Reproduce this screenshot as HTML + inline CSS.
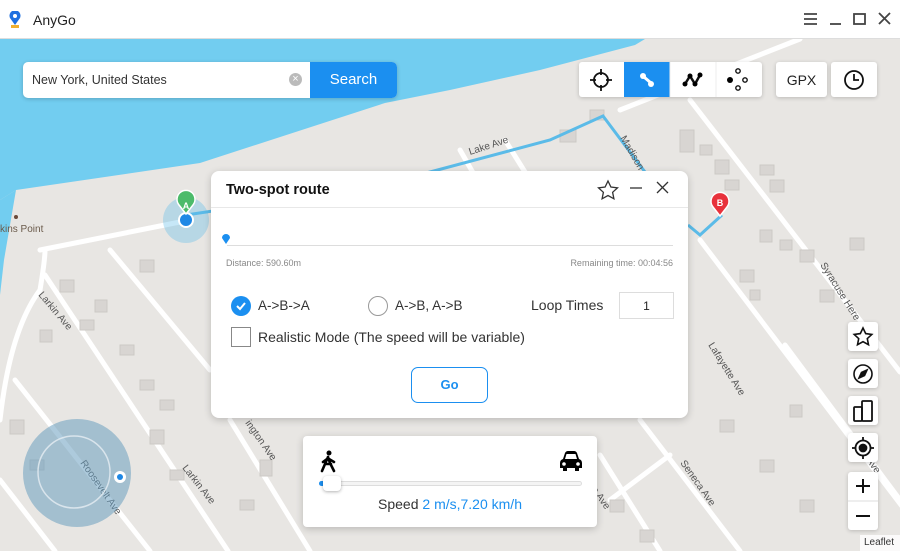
<!DOCTYPE html>
<html><head><meta charset="utf-8">
<style>
*{box-sizing:border-box;margin:0;padding:0}
body{width:900px;height:551px;overflow:hidden;font-family:"Liberation Sans",sans-serif;background:#e8e6e3;position:relative}
.abs{position:absolute}
.btn{position:absolute;background:#fff;border-radius:3px;box-shadow:0 1px 4px rgba(0,0,0,.2);display:flex;align-items:center;justify-content:center}
.card{position:absolute;background:#fff;border-radius:8px;box-shadow:0 2px 8px rgba(0,0,0,.2)}
</style></head><body>
<!-- map -->
<svg class="abs" style="left:0;top:0" width="900" height="551">
<rect width="900" height="551" fill="#e8e6e3"/>
<polygon points="0,39 645,39 635,45 540,70 450,90 385,103 200,163 16,190 0,200" fill="#72cdf0"/>
<polygon points="0,200 16,190 4,260 0,295" fill="#72cdf0"/>
<g stroke="#fff" stroke-width="5" fill="none" stroke-linecap="round">
<path d="M0,420 Q10,330 40,290 Q45,260 45,250"/>
<path d="M40,250 L190,220"/>
<path d="M15,380 L150,551"/>
<path d="M0,480 L55,551"/>
<path d="M45,275 L228,551"/>
<path d="M110,250 L210,370"/>
<path d="M230,420 L310,551"/>
<path d="M690,100 L900,372"/>
<path d="M700,240 L920,530"/>
<path d="M620,110 L800,39"/>
<path d="M785,345 L900,500"/>
<path d="M640,420 L740,551"/>
<path d="M670,455 L610,500"/>
<path d="M600,455 L660,551"/>
<path d="M505,140 L530,180"/>
<path d="M460,150 L480,185"/>
</g>
<g fill="#d8d5d2" stroke="#ccc9c5" stroke-width="1">
<rect x="560" y="130" width="16" height="12"/><rect x="590" y="110" width="14" height="10"/><rect x="680" y="130" width="14" height="22"/><rect x="700" y="145" width="12" height="10"/>
<rect x="715" y="160" width="14" height="14"/><rect x="725" y="180" width="14" height="10"/><rect x="760" y="165" width="14" height="10"/><rect x="770" y="180" width="14" height="12"/>
<rect x="800" y="250" width="14" height="12"/><rect x="780" y="240" width="12" height="10"/><rect x="820" y="290" width="14" height="12"/><rect x="850" y="238" width="14" height="12"/>
<rect x="760" y="230" width="12" height="12"/><rect x="740" y="270" width="14" height="12"/><rect x="750" y="290" width="10" height="10"/>
<rect x="60" y="280" width="14" height="12"/><rect x="80" y="320" width="14" height="10"/><rect x="40" y="330" width="12" height="12"/><rect x="120" y="345" width="14" height="10"/>
<rect x="140" y="380" width="14" height="10"/><rect x="160" y="400" width="14" height="10"/><rect x="150" y="430" width="14" height="14"/><rect x="170" y="470" width="14" height="10"/>
<rect x="10" y="420" width="14" height="14"/><rect x="30" y="460" width="14" height="10"/><rect x="95" y="300" width="12" height="12"/><rect x="140" y="260" width="14" height="12"/>
<rect x="260" y="460" width="12" height="16"/><rect x="240" y="500" width="14" height="10"/><rect x="610" y="500" width="14" height="12"/><rect x="640" y="530" width="14" height="12"/>
<rect x="720" y="420" width="14" height="12"/><rect x="760" y="460" width="14" height="12"/><rect x="800" y="500" width="14" height="12"/><rect x="790" y="405" width="12" height="12"/>
</g>
<!-- blue route -->
<g stroke="#5bbbe8" stroke-width="3" fill="none">
<path d="M186,215 L300,198 L400,180 L550,140 L603,116 L645,172"/>
<path d="M688,225 L700,235 L722,215"/>
</g>
<g font-size="10" fill="#555" font-family="Liberation Sans,sans-serif">
<text x="470" y="155" transform="rotate(-18 470 155)">Lake Ave</text>
<text x="620" y="138" transform="rotate(60 620 138)">Madison</text>
<text x="0" y="232" fill="#6a5a4a">kins Point</text>
<text x="38" y="295" transform="rotate(50 38 295)">Larkin Ave</text>
<text x="182" y="468" transform="rotate(52 182 468)">Larkin Ave</text>
<text x="80" y="463" transform="rotate(55 80 463)">Roosevelt Ave</text>
<text x="245" y="423" transform="rotate(55 245 423)">ington Ave</text>
<text x="588" y="485" transform="rotate(55 588 485)">go Ave</text>
<text x="680" y="463" transform="rotate(55 680 463)">Seneca Ave</text>
<text x="708" y="345" transform="rotate(58 708 345)">Lafayette Ave</text>
<text x="820" y="265" transform="rotate(58 820 265)">Syracuse Here</text>
<text x="866" y="460" transform="rotate(55 866 460)">Ave</text>
</g>
<circle cx="16" cy="217" r="2" fill="#6a4a3a"/>
<!-- A marker -->
<circle cx="186" cy="220" r="23" fill="#5bbbe8" opacity=".35"/>
<circle cx="186" cy="220" r="7" fill="#1e88e5" stroke="#fff" stroke-width="2"/>
<path d="M186,214 l-7,-9 a9,9 0 1 1 14,0 z" fill="#4cbb6a" stroke="#fff" stroke-width="1.5"/>
<text x="186" y="209" font-size="9" fill="#fff" text-anchor="middle" font-weight="bold">A</text>
<!-- B marker -->
<path d="M720,216 l-7,-9 a9,9 0 1 1 14,0 z" fill="#e8323c" stroke="#fff" stroke-width="1.5"/>
<text x="720" y="206" font-size="9" fill="#fff" text-anchor="middle" font-weight="bold">B</text>
<!-- joystick -->
<circle cx="77" cy="473" r="54" fill="#6a9fc0" opacity=".55"/>
<circle cx="74" cy="472" r="36" fill="none" stroke="#e6eef2" stroke-width="1.5" opacity=".8"/>
<circle cx="120" cy="477" r="6" fill="#fff"/><circle cx="120" cy="477" r="3" fill="#1e88e5"/>
</svg>

<!-- title bar -->
<div class="abs" style="left:0;top:0;width:900px;height:39px;background:#fff;border-bottom:1px solid #ddd">
<svg class="abs" style="left:8px;top:11px" width="14" height="18"><path d="M7,14 L2,7 a5.5,5.5 0 1 1 10,0z" fill="#1e6fe0"/><circle cx="7" cy="5" r="2" fill="#fff"/><rect x="3" y="14" width="8" height="3" fill="#f0b030"/></svg>
<div class="abs" style="left:33px;top:12px;font-size:14px;color:#222">AnyGo</div>
<svg class="abs" style="left:800px;top:10px" width="95" height="20" stroke="#444" stroke-width="1.8" fill="none">
<path d="M4,4h13M4,9h13M4,14h13"/><path d="M30,14h11"/><rect x="54" y="4" width="11" height="10"/><path d="M79,3l11,11M90,3l-11,11"/></svg>
</div>

<!-- search -->
<div class="abs" style="left:23px;top:62px;width:374px;height:36px;background:#fff;border-radius:5px;box-shadow:0 1px 4px rgba(0,0,0,.2);overflow:hidden">
<div class="abs" style="left:9px;top:11px;font-size:12.5px;color:#333">New York, United States</div>
<div class="abs" style="left:266px;top:11px;width:13px;height:13px;border-radius:50%;background:#bbb;color:#fff;font-size:11px;line-height:13px;text-align:center">×</div>
<div class="abs" style="left:287px;top:0;width:87px;height:36px;background:#1b8ff0;color:#fff;font-size:15px;line-height:36px;text-align:center">Search</div>
</div>

<!-- toolbar -->
<div class="abs" style="left:579px;top:62px;width:183px;height:35px;background:#fff;border-radius:3px;box-shadow:0 1px 4px rgba(0,0,0,.2)"></div>
<svg class="abs" style="left:579px;top:62px" width="183" height="35">
<rect x="45" y="0" width="46" height="35" fill="#1b8ff0"/>
<line x1="91" y1="0" x2="91" y2="35" stroke="#eee"/><line x1="137" y1="0" x2="137" y2="35" stroke="#eee"/>
<g stroke="#111" stroke-width="1.8" fill="none"><circle cx="22" cy="18" r="7"/><path d="M22,7v6M22,23v6M11,18h6M27,18h6"/></g>
<g stroke="#fff" stroke-width="3"><line x1="65" y1="15" x2="72" y2="21"/></g><circle cx="64" cy="14" r="3" fill="#fff"/><circle cx="72" cy="22" r="3" fill="#fff"/>
<path d="M106,22 L111,14 L116,22 L121,13" stroke="#111" stroke-width="2.5" fill="none"/><circle cx="106" cy="22" r="2.5"/><circle cx="111" cy="14" r="2.5"/><circle cx="116" cy="22" r="2.5"/><circle cx="121" cy="13" r="2.5"/>
<g fill="none" stroke="#111" stroke-width="1.4"><circle cx="159" cy="9" r="2.2"/><circle cx="166" cy="18" r="2.2"/><circle cx="159" cy="26" r="2.2"/></g><circle cx="151" cy="18" r="3"/>
</svg>
<div class="btn" style="left:776px;top:62px;width:51px;height:35px;font-size:14px;color:#222">GPX</div>
<div class="btn" style="left:831px;top:62px;width:46px;height:35px"><svg width="22" height="22" fill="none" stroke="#111" stroke-width="1.8"><circle cx="11" cy="11" r="9"/><path d="M11,5v6h5"/></svg></div>

<!-- dialog -->
<div class="card" style="left:211px;top:171px;width:477px;height:247px">
<div class="abs" style="left:15px;top:11px;font-size:14.5px;font-weight:bold;color:#111">Two-spot route</div>
<svg class="abs" style="left:385px;top:8px" width="80" height="22" fill="none" stroke="#333" stroke-width="1.3">
<path d="M12,2 l2.9,6 6.6,.8 -4.9,4.5 1.3,6.5 -5.9,-3.3 -5.9,3.3 1.3,-6.5 -4.9,-4.5 6.6,-.8z"/>
<path d="M34,9h12"/><path d="M61,3l11,11M72,3l-11,11"/></svg>
<div class="abs" style="left:0;top:36px;width:477px;height:1px;background:#e8e8e8"></div>
<svg class="abs" style="left:10px;top:62px" width="10" height="12"><path d="M5,11 L1,5 a4,4 0 1 1 8,0z" fill="#1b8ff0"/></svg>
<div class="abs" style="left:16px;top:74px;width:446px;height:1px;background:#ddd"></div>
<div class="abs" style="left:15px;top:87px;font-size:9px;color:#888">Distance: 590.60m</div>
<div class="abs" style="right:15px;top:87px;font-size:9px;color:#888">Remaining time: 00:04:56</div>
<div class="abs" style="left:20px;top:125px;width:20px;height:20px;border-radius:50%;background:#1b8ff0"><svg width="20" height="20"><path d="M6,10l3,3 5,-6" stroke="#fff" stroke-width="2" fill="none"/></svg></div>
<div class="abs" style="left:47px;top:127px;font-size:13.5px;color:#333">A-&gt;B-&gt;A</div>
<div class="abs" style="left:157px;top:125px;width:20px;height:20px;border-radius:50%;border:1px solid #999"></div>
<div class="abs" style="left:184px;top:127px;font-size:13.5px;color:#333">A-&gt;B, A-&gt;B</div>
<div class="abs" style="left:320px;top:126px;font-size:14px;color:#333">Loop Times</div>
<div class="abs" style="left:408px;top:121px;width:55px;height:27px;border:1px solid #ddd;font-size:12px;text-align:center;line-height:26px;color:#222">1</div>
<div class="abs" style="left:20px;top:156px;width:20px;height:20px;border:1px solid #888"></div>
<div class="abs" style="left:47px;top:158px;font-size:14px;color:#333">Realistic Mode (The speed will be variable)</div>
<div class="abs" style="left:200px;top:196px;width:77px;height:36px;border:1.5px solid #1b8ff0;border-radius:7px;color:#1b8ff0;font-weight:bold;font-size:13px;text-align:center;line-height:33px">Go</div>
</div>

<!-- speed panel -->
<div class="card" style="left:303px;top:436px;width:294px;height:91px;border-radius:4px">
<svg class="abs" style="left:16px;top:14px" width="20" height="24"><circle cx="10" cy="3" r="2.5"/><path d="M9,7 L6,14 L3,21 M9,7 L11,13 L15,21 M8,9 L4,12 M10,9 L15,12 M7,14 L12,14" stroke="#000" stroke-width="2.6" fill="none" stroke-linecap="round"/></svg>
<svg class="abs" style="left:256px;top:14px" width="24" height="22"><path d="M4,9 L6,3 Q7,1 9,1 H15 Q17,1 18,3 L20,9 Q23,10 23,13 V18 H20 V21 H16 V18 H8 V21 H4 V18 H1 V13 Q1,10 4,9z M6,9 H18 L16.5,4 H7.5z" fill="#000" fill-rule="evenodd"/><circle cx="5" cy="14" r="1.8" fill="#fff"/><circle cx="19" cy="14" r="1.8" fill="#fff"/></svg>
<div class="abs" style="left:16px;top:45px;width:263px;height:5px;border:1px solid #ddd;border-radius:3px;background:#f4f4f4"></div>
<div class="abs" style="left:16px;top:45px;width:12px;height:5px;background:#1b8ff0;border-radius:3px"></div>
<div class="abs" style="left:20px;top:40px;width:18px;height:15px;border-radius:4px;background:#fff;box-shadow:0 1px 3px rgba(0,0,0,.3)"></div>
<div class="abs" style="left:0;top:60px;width:294px;text-align:center;font-size:14px;color:#333">Speed <span style="color:#1b8ff0">2 m/s,7.20 km/h</span></div>
</div>

<!-- right buttons -->
<div class="btn" style="left:848px;top:322px;width:30px;height:29px"><svg width="22" height="22" fill="none" stroke="#111" stroke-width="1.6"><path d="M11,2 l2.7,5.6 6.1,.8 -4.5,4.2 1.2,6.1 -5.5,-3 -5.5,3 1.2,-6.1 -4.5,-4.2 6.1,-.8z"/></svg></div>
<div class="btn" style="left:848px;top:359px;width:30px;height:29px"><svg width="22" height="22" fill="none" stroke="#111" stroke-width="1.6"><circle cx="11" cy="11" r="9"/><path d="M15,7 L12.5,12.5 L7,15 L9.5,9.5z" fill="#111"/></svg></div>
<div class="btn" style="left:848px;top:396px;width:30px;height:29px"><svg width="22" height="24" fill="none" stroke="#111" stroke-width="1.8"><rect x="2" y="8" width="8" height="14" rx="1"/><rect x="10" y="2" width="10" height="20" rx="1"/></svg></div>
<div class="btn" style="left:848px;top:433px;width:30px;height:29px"><svg width="24" height="24" fill="none" stroke="#111" stroke-width="1.8"><circle cx="12" cy="12" r="7.5"/><circle cx="12" cy="12" r="3.5" fill="#111"/><path d="M12,1v4M12,19v4M1,12h4M19,12h4"/></svg></div>
<div class="btn" style="left:848px;top:472px;width:30px;height:58px;flex-direction:column">
<svg width="30" height="58" stroke="#111" stroke-width="2"><path d="M15,7v14M8,14h14"/><line x1="0" y1="29" x2="30" y2="29" stroke="#ddd" stroke-width="1"/><path d="M8,44h14"/></svg></div>
<div class="abs" style="left:860px;top:535px;width:40px;height:16px;background:rgba(255,255,255,.8);font-size:10px;color:#333;padding:2px 0 0 4px">Leaflet</div>
</body></html>
